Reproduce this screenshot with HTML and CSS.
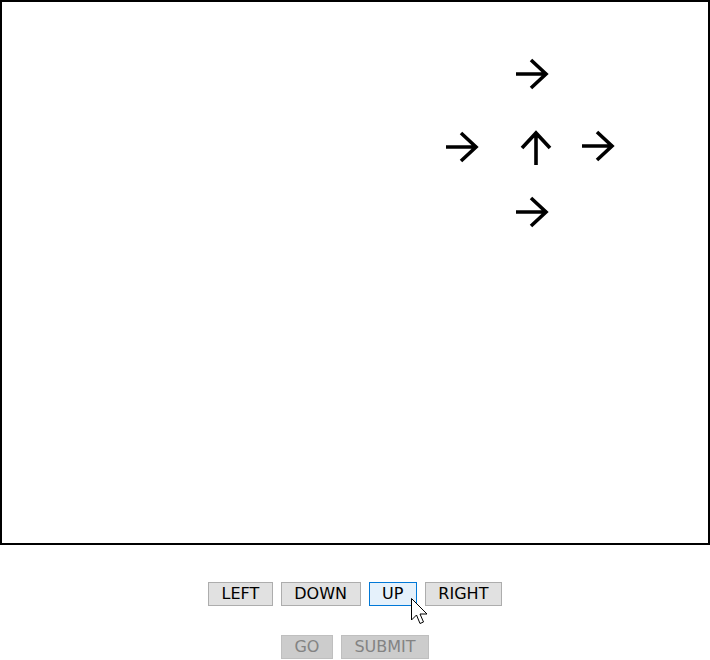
FILE: index.html
```html
<!DOCTYPE html>
<html>
<head>
<meta charset="utf-8">
<link rel="stylesheet" href="styles.css">
</head>
<body>
<div class="board">
  <svg class="arrow a-top" width="40" height="34" viewBox="0 0 40 34"><path d="M4 17 H35 M19 3 L34 17 L19 31"/></svg>
  <svg class="arrow a-left" width="40" height="34" viewBox="0 0 40 34"><path d="M4 17 H35 M19 3 L34 17 L19 31"/></svg>
  <svg class="arrow a-up" width="36" height="38" viewBox="0 0 36 38"><path d="M18 36 V5 M4 19 L18 4 L32 19"/></svg>
  <svg class="arrow a-right" width="40" height="34" viewBox="0 0 40 34"><path d="M4 17 H35 M19 3 L34 17 L19 31"/></svg>
  <svg class="arrow a-bottom" width="40" height="34" viewBox="0 0 40 34"><path d="M4 17 H35 M19 3 L34 17 L19 31"/></svg>
</div>
<div class="controls">
  <div class="row">
    <button class="btn">LEFT</button>
    <button class="btn">DOWN</button>
    <button class="btn focused">UP</button>
    <button class="btn">RIGHT</button>
  </div>
  <div class="row">
    <button class="btn" disabled>GO</button>
    <button class="btn" disabled>SUBMIT</button>
  </div>
</div>
<svg class="cursor" width="20" height="30" viewBox="0 0 20 30"><path d="M1.5 1.5 V23 L6.5 18 L10 26.5 L13.5 25 L10 17 H17 Z"/></svg>
</body>
</html>
```

FILE: styles.css
```css
html, body {
  margin: 0;
  padding: 0;
  background: #fff;
  font-family: "DejaVu Sans", sans-serif;
}

body {
  width: 710px;
  height: 660px;
  position: relative;
  overflow: hidden;
}

.board {
  position: relative;
  box-sizing: border-box;
  width: 710px;
  height: 545px;
  border: 2px solid #000;
}

.arrow {
  position: absolute;
  fill: none;
  stroke: #000;
  stroke-width: 3.6;
}

.a-top { left: 510px; top: 55px; }
.a-left { left: 440px; top: 128px; }
.a-up { left: 516px; top: 127px; }
.a-right { left: 576px; top: 127px; }
.a-bottom { left: 510px; top: 193px; }

.controls {
  display: flex;
  flex-direction: column;
  align-items: center;
  gap: 29px;
  padding-top: 37px;
}

.row {
  display: flex;
  gap: 8px;
}

.btn {
  box-sizing: border-box;
  height: 24px;
  padding: 0 12.5px;
  margin: 0;
  border: 1px solid #adadad;
  background: #e1e1e1;
  color: #000;
  font-family: "DejaVu Sans", sans-serif;
  font-size: 16px;
  line-height: 22px;
  border-radius: 0;
}

.btn.focused {
  border-color: #0078d7;
  background: #e5f1fb;
}

.btn:disabled {
  background: #cccccc;
  border-color: #bfbfbf;
  color: #838383;
}

.cursor {
  position: absolute;
  left: 410px;
  top: 597px;
  fill: #fff;
  stroke: #000;
  stroke-width: 1;
}
```
